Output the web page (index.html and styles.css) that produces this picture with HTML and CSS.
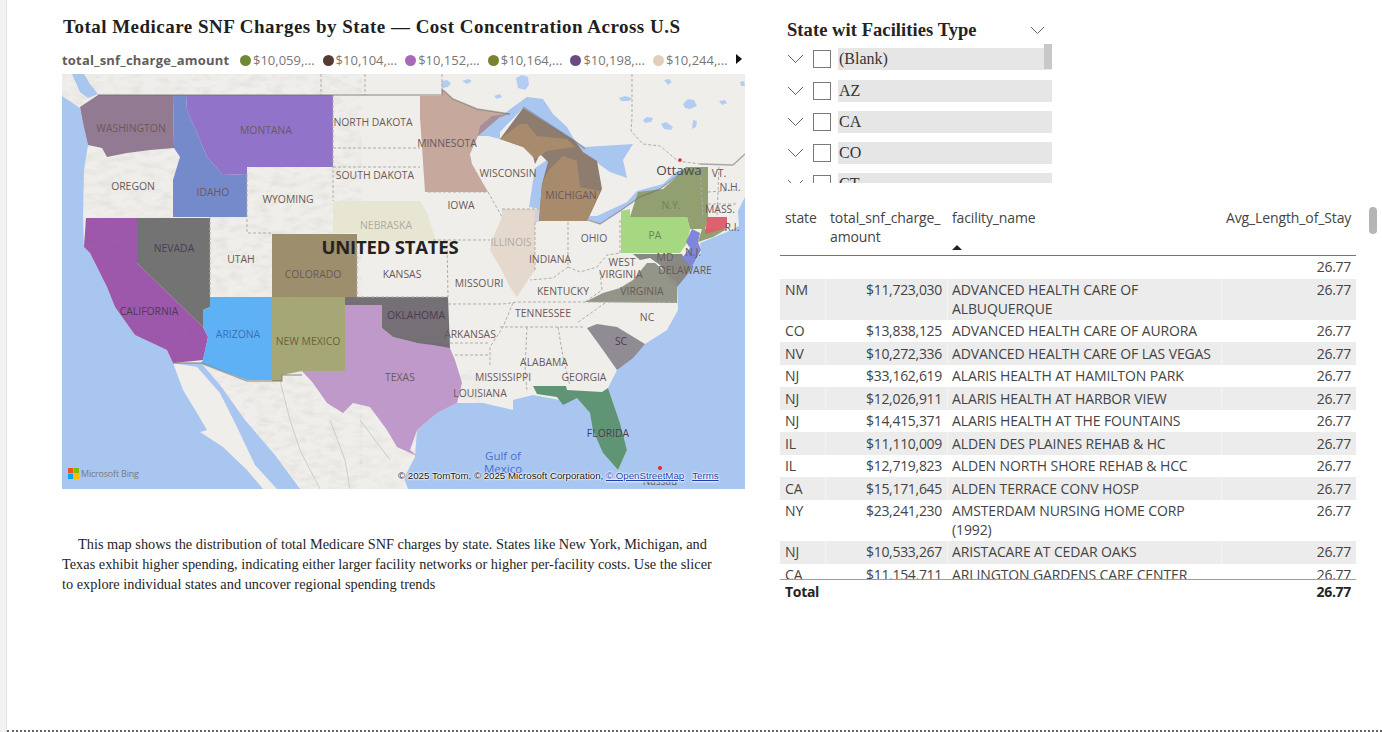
FILE: index.html
```html
<!DOCTYPE html>
<html lang="en">
<head>
<meta charset="utf-8">
<title>Medicare SNF Charges</title>
<link rel="stylesheet" href="styles.css">
</head>
<body>
<div class="page">
  <div class="strip"></div>
  <main class="canvas">
    <section class="left">
      <h1 class="title">Total Medicare SNF Charges by State — Cost Concentration Across U.S</h1>
      <div class="legend">
        <span class="legend-name">total_snf_charge_amount</span>
        <span class="legend-item"><i class="dot d1"></i>$10,059,...</span>
        <span class="legend-item"><i class="dot d2"></i>$10,104,...</span>
        <span class="legend-item"><i class="dot d3"></i>$10,152,...</span>
        <span class="legend-item"><i class="dot d4"></i>$10,164,...</span>
        <span class="legend-item"><i class="dot d5"></i>$10,198,...</span>
        <span class="legend-item"><i class="dot d6"></i>$10,244,...</span>
        <svg class="legend-next" width="6" height="12" viewBox="0 0 6 12"><path d="M0 1l6 5-6 5z"/></svg>
      </div>
      <div class="map">
        <svg class="map-svg" width="683" height="415" viewBox="62 74 683 415" xmlns="http://www.w3.org/2000/svg">
          <defs>
            <filter id="rough" x="0" y="0" width="100%" height="100%">
              <feTurbulence type="fractalNoise" baseFrequency="0.07 0.16" numOctaves="3" seed="4"/>
              <feColorMatrix values="0 0 0 0 .5  0 0 0 0 .5  0 0 0 0 .48  1.6 0 0 0 -.68"/>
            </filter>
            <clipPath id="landclip">
              <path d="M62 74V96L80 108 83 123 88 145 84 170 83 217 84 247 90 253 107 287 115 307 135 335 167 350 173 363 201 363 220 385 245 420 275 455 300 489H408L404 478 415 457 417 430 437 413 457 403 483 403 513 410 513 400 533 395 560 400 577 398 590 413 603 453 618 470 627 450 620 423 608 388 617 370 645 344 667 330 678 310 677 283 692 267 701 252 700 243 727 232 739 226 738 211 745 197V74Z"/>
            </clipPath>
          </defs>
          <rect class="ocean" x="62" y="74" width="683" height="415"/>
          <path class="land" d="M62 74V96L80 108 83 123 88 145 84 170 83 217 84 247 90 253 107 287 115 307 135 335 167 350 173 363 201 363 220 385 245 420 275 455 300 489H408L404 478 415 457 417 430 437 413 457 403 483 403 513 410 513 400 533 395 560 400 577 398 590 413 603 453 618 470 627 450 620 423 608 388 617 370 645 344 667 330 678 310 677 283 692 267 701 252 700 243 727 232 739 226 738 211 745 197V74Z"/>
          <path class="land" d="M173 363L183 390 197 413 207 430 200 432 223 447 247 470 263 489H277L255 465 237 427 220 393 197 367Z"/>
          <rect class="rough" x="62" y="74" width="300" height="415" clip-path="url(#landclip)" filter="url(#rough)"/>
          <rect class="rough rough-e" x="360" y="370" width="120" height="119" clip-path="url(#landclip)" filter="url(#rough)"/>
          <path class="ocean" d="M72 74L84 74 90 84 98 94 88 98 80 92Z"/>
          <path class="lake" d="M478 136L500 117 513 107 527 97 543 99 553 114 567 127 575 141 585 147 633 144 623 160 627 178 610 172 600 165 595 160 583 152 523 108 500 132 500 139 488 136Z"/>
          <path class="lake" d="M588 219L600 224 620 211 640 197 660 189 680 174 687 167 676 172 663 184 637 191 627 202 597 216 590 216Z"/>
          <path class="lake" d="M547 160L535 168 529 207 540 209 543 184 549 165Z"/>
          <path class="lake-gray" d="M530 209H540L539 222H535Z"/>
          <g class="lake-small">
            <path d="M516 78l6-3 6 2 1 8-4 5-7-2zM441 81l6-1 4 3-3 4-6 1zM462 81l6-2 4 2-5 3zM494 96l6-2 2 3-5 2zM619 98l6-2 7 2-3 3-8 0zM683 104l5-5 6 1 3 6-7 3-5-1zM719 101l6-1 2 3-5 2zM643 120l4-3 6 1-2 4-6 1zM661 124l5-2 7 5-2 3-7-1zM693 120l4 1-1 6-4 2zM664 80l5-1 3 3-4 3zM740 82l4-1 1 5-4 0z"/>
          </g>
          <path class="st" fill="#8f7690" d="M80 107L98 95H173L174 148 150 150 127 153 107 157 102 148 88 145 83 123Z"/>
          <path class="st" fill="#7186c8" d="M173 95H186L187 110 197 133 207 157 223 175 247 174V217H173V180L180 157 174 148Z"/>
          <path class="st" fill="#8d70c8" d="M186 95H333V167H247V174L223 175 207 157 197 133 187 110Z"/>
          <path class="st" fill="#c4a59a" d="M420 96H442V89L453 99 477 109 510 114 500 117 478 136 470 154 472 164 488 192H425L420 117Z"/>
          <path class="st-o" fill="#8f7f94" d="M510 114L500 117 478 136 480 126 492 116Z"/>
          <path class="st" fill="#8a786a" d="M500 139L523 108 575 141 583 152 597 161 602 189 588 219 587 221H539L542 184 548 162 540 154 535 164 532 152 523 147Z"/>
          <path class="st" fill="#a98a6c" d="M548 171L563 156 577 161 580 187 600 191 588 219 587 221H539L542 184Z"/>
          <path class="st" fill="#a98a6c" d="M500 139L520 124H527L537 136 567 139 575 147 547 151 535 159 523 147Z"/>
          <path class="st" fill="#8e9c6c" d="M708 167V217L705 229 727 229 713 237 698 242 702 229H690L687 217H630L638 192 663 189 680 174 687 167Z"/>
          <path class="st" fill="#a3d67d" d="M621 211L630 209V217H687L690 230 687 243 680 253H621Z"/>
          <path class="st" fill="#85857f" d="M633 254H682L684 258 692 267 687 275 677 287 671 283 660 265 650 258 640 260Z"/>
          <path class="st" fill="#7c83da" d="M692 229L700 233 698 242 701 250 692 267 682 258 690 248 686 242Z"/>
          <path class="st" fill="#dc5d68" d="M707 217H727V228L705 234Z"/>
          <path class="st" fill="#8f9284" d="M585 302L603 293 620 288 633 280 647 263 655 263 677 283V303Z"/>
          <path class="st" fill="#8d8890" d="M587 328L597 324 617 327 645 344 633 358 617 370 603 350Z"/>
          <path class="st" fill="#5a9270" d="M533 386H566L567 390 602 392 608 388 620 423 627 450 618 470 603 453 593 430 590 413 577 398 563 405 557 397 537 394Z"/>
          <path class="st" fill="#e4d8cc" d="M502 209H535V270L528 280 517 297 510 287 500 267 490 250 492 240 502 217Z"/>
          <path class="st" fill="#e5e5d2" d="M333 201H420L428 215 436 241H357V233H333Z"/>
          <path class="st" fill="#9a52a8" d="M86 218H137V263L203 327 208 337 203 360 173 363 167 350 135 335 115 307 107 287 90 253 84 247Z"/>
          <path class="st" fill="#6e6e6e" d="M137 218H210V307L203 310V327L137 263Z"/>
          <path class="st" fill="#5aaef5" d="M210 297H272V380H247L201 363 203 360 208 337 203 327V310L210 307Z"/>
          <path class="st" fill="#a3a472" d="M272 297H345V371H302L282 375V381H272Z"/>
          <path class="st" fill="#9a8a68" d="M272 234H357V297H272Z"/>
          <path class="st" fill="#bd96c8" d="M345 305H382V328L393 337 417 343 447 343 450 348 455 360 462 383 457 403 437 413 417 430 410 450 417 456 397 447 387 430 370 407 353 403 343 413 327 403 313 383 302 371H345Z"/>
          <path class="st" fill="#716a72" d="M345 297H448L450 348 433 345 417 343 393 337 382 328V305H345Z"/>
          <path class="dash" d="M333 95V201M333 148H420M333 167H420M247 174V233H272M210 217V297M428 192H488M488 192L502 217M433 240H490M447 240L448 297M357 241V297H448M535 222V270M502 209H540M568 222V267L553 278 530 280M568 267L580 272 597 267 607 255 620 253M620 220V253M600 272L602 290 585 302M448 304H503L517 302H677M605 303L577 323M500 327H585M513 303L503 327 490 347V367M450 343L490 343M455 355H488M527 327L525 367 527 392M558 327L563 357 570 386M700 167L703 216M719 167L717 217M708 192L735 190M708 204H736M321 74V95M365 74V95M442 74V89M632 74V117L631 131 643 144 660 146 678 161 700 164"/>
          <path class="dash dash-mx" d="M280 381L290 420 300 450 320 489M330 420L345 460 350 489M360 420L390 460"/>
          <path class="shadow" d="M98 95H442V89L453 99 477 109 510 114M523 107L575 141 585 149M700 164L733 165 745 154M588 220L600 224 620 211 640 197 660 189 680 174 687 167M173 363H201L247 381H282V375H302"/>
          <g class="labels">
            <text x="131" y="132">WASHINGTON</text><text x="266" y="134">MONTANA</text><text x="373" y="126">NORTH DAKOTA</text>
            <text x="447" y="147">MINNESOTA</text><text x="508" y="177">WISCONSIN</text><text x="571" y="199">MICHIGAN</text>
            <text x="133" y="190">OREGON</text><text x="213" y="196">IDAHO</text><text x="288" y="203">WYOMING</text>
            <text x="375" y="179">SOUTH DAKOTA</text><text x="461" y="209">IOWA</text>
            <text class="pale" x="386" y="229">NEBRASKA</text><text class="pale" x="511" y="246">ILLINOIS</text>
            <text x="594" y="242">OHIO</text><text class="on-green" x="655" y="239">PA</text><text class="on-green" x="671" y="209">N.Y.</text>
            <text x="719" y="177">VT.</text><text x="730" y="191">N.H.</text><text x="720" y="213">MASS.</text><text x="732" y="231">R.I.</text>
            <text class="dark" x="149" y="315">CALIFORNIA</text><text class="dark" x="174" y="252">NEVADA</text><text x="241" y="263">UTAH</text>
            <text x="313" y="278">COLORADO</text><text x="402" y="278">KANSAS</text><text x="550" y="263">INDIANA</text>
            <text x="479" y="287">MISSOURI</text><text x="563" y="295">KENTUCKY</text><text x="622" y="266">WEST</text><text x="621" y="278">VIRGINIA</text>
            <text x="642" y="295">VIRGINIA</text><text x="665" y="261">MD</text><text x="693" y="256">N.J.</text><text x="685" y="274">DELAWARE</text>
            <text x="543" y="317">TENNESSEE</text><text x="647" y="321">NC</text><text class="on-blue" x="238" y="338">ARIZONA</text>
            <text class="on-olive" x="308" y="345">NEW MEXICO</text><text class="dark" x="416" y="319">OKLAHOMA</text><text x="470" y="338">ARKANSAS</text>
            <text class="dark" x="621" y="345">SC</text><text x="544" y="366">ALABAMA</text><text x="503" y="381">MISSISSIPPI</text><text x="584" y="381">GEORGIA</text>
            <text x="400" y="381">TEXAS</text><text x="480" y="397">LOUISIANA</text><text class="dark" x="608" y="437">FLORIDA</text>
          </g>
          <text class="country" x="390" y="254">UNITED STATES</text>
          <text class="city" x="679" y="175">Ottawa</text>
          <circle class="capital" cx="680" cy="160" r="1.8"/>
          <text class="gulf" x="503" y="460">Gulf of</text>
          <text class="gulf" x="503" y="473">Mexico</text>
          <text class="nassau" x="660" y="485">Nassau</text>
          <circle class="capital" cx="660" cy="468" r="2"/>
        </svg>
        <div class="bing">
          <svg width="11" height="11" viewBox="0 0 11 11"><path fill="#f25022" d="M0 0h5.2v5.2H0z"/><path fill="#7fba00" d="M5.8 0H11v5.2H5.8z"/><path fill="#00a4ef" d="M0 5.8h5.2V11H0z"/><path fill="#ffb900" d="M5.8 5.8H11V11H5.8z"/></svg>
          <span>Microsoft Bing</span>
        </div>
        <div class="attrib">© 2025 TomTom, © 2025 Microsoft Corporation, <u class="link">© OpenStreetMap</u><u class="link terms">Terms</u></div>
      </div>
      <p class="note">This map shows the distribution of total Medicare SNF charges by state. States like New York, Michigan, and Texas exhibit higher spending, indicating either larger facility networks or higher per-facility costs. Use the slicer to explore individual states and uncover regional spending trends</p>
    </section>

    <section class="right">
      <div class="slicer">
        <div class="slicer-head">
          <h2 class="slicer-title">State wit Facilities Type</h2>
          <svg class="chev head-chev" width="15" height="9" viewBox="0 0 15 9"><path d="M1 1l6.5 6.5L14 1"/></svg>
        </div>
        <div class="slicer-list">
          <div class="thumb"></div>
          <div class="slicer-row"><svg class="chev" width="17" height="10" viewBox="0 0 17 10"><path d="M1 1l7.5 7.5L16 1"/></svg><i class="box"></i><span class="opt">(Blank)</span></div>
          <div class="slicer-row"><svg class="chev" width="17" height="10" viewBox="0 0 17 10"><path d="M1 1l7.5 7.5L16 1"/></svg><i class="box"></i><span class="opt">AZ</span></div>
          <div class="slicer-row"><svg class="chev" width="17" height="10" viewBox="0 0 17 10"><path d="M1 1l7.5 7.5L16 1"/></svg><i class="box"></i><span class="opt">CA</span></div>
          <div class="slicer-row"><svg class="chev" width="17" height="10" viewBox="0 0 17 10"><path d="M1 1l7.5 7.5L16 1"/></svg><i class="box"></i><span class="opt">CO</span></div>
          <div class="slicer-row"><svg class="chev" width="17" height="10" viewBox="0 0 17 10"><path d="M1 1l7.5 7.5L16 1"/></svg><i class="box"></i><span class="opt">CT</span></div>
        </div>
      </div>

      <div class="table">
        <div class="row head">
          <div class="cell">state</div>
          <div class="cell">total_snf_charge_<br>amount</div>
          <div class="cell">facility_name<svg class="sort" width="10" height="5" viewBox="0 0 10 5"><path d="M5 0l5 5H0z"/></svg></div>
          <div class="cell num">Avg_Length_of_Stay</div>
        </div>
        <div class="body">
          <div class="row"><div class="cell"></div><div class="cell num"></div><div class="cell"></div><div class="cell num">26.77</div></div>
          <div class="row alt"><div class="cell">NM</div><div class="cell num">$11,723,030</div><div class="cell">ADVANCED HEALTH CARE OF ALBUQUERQUE</div><div class="cell num">26.77</div></div>
          <div class="row"><div class="cell">CO</div><div class="cell num">$13,838,125</div><div class="cell">ADVANCED HEALTH CARE OF AURORA</div><div class="cell num">26.77</div></div>
          <div class="row alt"><div class="cell">NV</div><div class="cell num">$10,272,336</div><div class="cell">ADVANCED HEALTH CARE OF LAS VEGAS</div><div class="cell num">26.77</div></div>
          <div class="row"><div class="cell">NJ</div><div class="cell num">$33,162,619</div><div class="cell">ALARIS HEALTH AT HAMILTON PARK</div><div class="cell num">26.77</div></div>
          <div class="row alt"><div class="cell">NJ</div><div class="cell num">$12,026,911</div><div class="cell">ALARIS HEALTH AT HARBOR VIEW</div><div class="cell num">26.77</div></div>
          <div class="row"><div class="cell">NJ</div><div class="cell num">$14,415,371</div><div class="cell">ALARIS HEALTH AT THE FOUNTAINS</div><div class="cell num">26.77</div></div>
          <div class="row alt"><div class="cell">IL</div><div class="cell num">$11,110,009</div><div class="cell">ALDEN DES PLAINES REHAB &amp; HC</div><div class="cell num">26.77</div></div>
          <div class="row"><div class="cell">IL</div><div class="cell num">$12,719,823</div><div class="cell">ALDEN NORTH SHORE REHAB &amp; HCC</div><div class="cell num">26.77</div></div>
          <div class="row alt"><div class="cell">CA</div><div class="cell num">$15,171,645</div><div class="cell">ALDEN TERRACE CONV HOSP</div><div class="cell num">26.77</div></div>
          <div class="row"><div class="cell">NY</div><div class="cell num">$23,241,230</div><div class="cell">AMSTERDAM NURSING HOME CORP (1992)</div><div class="cell num">26.77</div></div>
          <div class="row alt"><div class="cell">NJ</div><div class="cell num">$10,533,267</div><div class="cell">ARISTACARE AT CEDAR OAKS</div><div class="cell num">26.77</div></div>
          <div class="row"><div class="cell">CA</div><div class="cell num">$11,154,711</div><div class="cell">ARLINGTON GARDENS CARE CENTER</div><div class="cell num">26.77</div></div>
        </div>
        <div class="row total">
          <div class="cell">Total</div><div class="cell"></div><div class="cell"></div><div class="cell num">26.77</div>
        </div>
        <div class="table-scroll"></div>
      </div>
    </section>
  </main>
</div>
</body>
</html>
```
FILE: styles.css
```css
* { box-sizing: border-box; }
html, body { margin: 0; height: 100%; background: #fff; overflow: hidden; }
.page { display: flex; width: 1382px; height: 732px; }
.strip { width: 7px; flex: none; background: #f3f2f1; border-right: 1px solid #e3e2e1; }
.canvas {
  flex: 1; display: flex; height: 732px; padding: 0 0 0 55px;
  border-bottom: 2px dotted #666;
}
.left { width: 683px; flex: none; }
.title {
  margin: 16px 0 0 1px; height: 24px;
  font: bold 19px/22px "Liberation Serif", serif; color: #1f1f1f; letter-spacing: .48px; white-space: nowrap;
}
.legend {
  display: flex; align-items: center; height: 20px; margin-top: 10px;
  font: 13px/20px "Open Sans", sans-serif; color: #7a7876; white-space: nowrap; position: relative;
}
.legend-name { font-weight: 700; color: #605e5c; width: 178px; flex: none; letter-spacing: .2px; }
.legend-item { display: flex; align-items: center; width: 82.6px; flex: none; letter-spacing: 0; }
.dot { width: 11px; height: 11px; border-radius: 50%; margin: 0 2px 0 0; flex: none; }
.d1 { background: #6f8a36; } .d2 { background: #543a30; } .d3 { background: #a868b8; }
.d4 { background: #7a8230; } .d5 { background: #6a4a80; } .d6 { background: #e0cfbd; }
.legend-next { position: absolute; left: 674px; top: 3px; fill: #111; }

.map { position: relative; width: 683px; height: 415px; margin-top: 4px; overflow: hidden; }
.map-svg { display: block; }
.ocean { fill: #a8c6f0; }
.land { fill: #f0eeea; }
.lake { fill: #a8c6f0; }
.lake-gray { fill: #ccd3de; }
.lake-small { fill: #b3cdf2; }
.rough { opacity: .32; }
.rough-e { opacity: .25; }
.st { stroke: none; opacity: .97; }
.st-o { stroke: none; opacity: .6; }
.dash { fill: none; stroke: #b0ada7; stroke-width: 1; stroke-dasharray: 3 2; }
.dash-mx { stroke: #d0cdc7; stroke-dasharray: none; }
.shadow { fill: none; stroke: #6f6d68; stroke-width: 1.4; opacity: .55; }
.labels text { font: 10.4px "Open Sans", sans-serif; fill: #6a5a58; text-anchor: middle; }
.labels .pale { fill: #b0aca0; }
.labels .dark { fill: #4c3d50; }
.labels .on-green { fill: #6f8455; }
.labels .on-blue { fill: #3a72b4; }
.labels .on-olive { fill: #66643a; }
.country { font: bold 18.5px "Open Sans", sans-serif; fill: #26231e; text-anchor: middle; letter-spacing: -.2px; }
.city { font: 13.5px "Open Sans", sans-serif; fill: #4d4a48; text-anchor: middle; }
.gulf { font: 11.5px "Open Sans", sans-serif; fill: #4a6fd0; text-anchor: middle; }
.nassau { font: 10px "Open Sans", sans-serif; fill: #5a5a5a; text-anchor: middle; }
.capital { fill: #e8281e; }
.bing { position: absolute; left: 6px; bottom: 10px; display: flex; align-items: center; gap: 2px; font: 9px/11px "Open Sans", sans-serif; color: #7b7b7b; letter-spacing: -.2px; }
.attrib {
  position: absolute; left: 336px; top: 396px; white-space: nowrap;
  font: 9.7px/12px "Liberation Sans", sans-serif; color: #111;
  text-shadow: 0 0 1px #fff, 0 0 2px #fff, 0 0 2px #fff, 0 0 3px #fff;
}
.link { color: #1a3fb0; }
.terms { margin-left: 8px; }
.note {
  margin: 45px 0 0; width: 655px;
  font: 14.33px/20px "Liberation Serif", serif; color: #252423; text-indent: 16px;
}

.right { width: 596px; margin-left: 35px; flex: none; position: relative; }
.slicer { margin-left: 7px; width: 266px; }
.slicer-head { display: flex; align-items: center; justify-content: space-between; height: 24px; margin-top: 18px; padding-right: 8px; }
.slicer-title { margin: 0; font: bold 18.5px/24px "Liberation Serif", serif; color: #252423; letter-spacing: .07px; }
.chev { fill: none; stroke: #666; stroke-width: 1; flex: none; }
.slicer-list { position: relative; height: 139px; margin-top: 2px; overflow: hidden; display: flex; flex-direction: column; gap: 9.3px; padding-top: 4.3px; }
.slicer-row { display: flex; align-items: center; height: 22px; flex: none; }
.box { width: 18px; height: 18px; border: 1px solid #7a7a7a; margin: 0 7px 0 9px; flex: none; background: #fff; }
.opt { flex: 1; max-width: 214px; height: 22px; background: #e6e6e6; font: 16px/22px "Liberation Serif", serif; color: #333; padding-left: 1px; }
.thumb { position: absolute; left: 257px; top: 0; width: 8px; height: 25px; background: #c8c8c8; z-index: 1; }

.table { position: absolute; left: 0; top: 207px; width: 576px; font: 14px/18.6px "Open Sans", sans-serif; color: #444; }
.row { display: grid; grid-template-columns: 45px 122px 274px 135px; min-height: 22.55px; }
.cell { padding: 2.4px 5px 1.5px; letter-spacing: -.12px; }
.num { text-align: right; letter-spacing: -.3px; }
.head .num { letter-spacing: -.12px; }
.head { height: 49px; border-bottom: 1px solid #2b86d9; }
.head .cell { padding-top: 2px; position: relative; }
.sort { position: absolute; left: 5px; top: 38px; fill: #222; }
.body { height: 324px; overflow: hidden; border-bottom: 1px solid #6fa8dc; }
.alt { background: #ececec; }
.alt .cell + .cell { box-shadow: inset 1px 0 0 #f4f4f4; }
.total { font-weight: 700; color: #252423; }
.total .cell { padding-top: 2.6px; letter-spacing: -.3px; }
.table-scroll { position: absolute; left: 589px; top: 0; width: 8px; height: 27px; border-radius: 4px; background: #b5b5b5; }
```
